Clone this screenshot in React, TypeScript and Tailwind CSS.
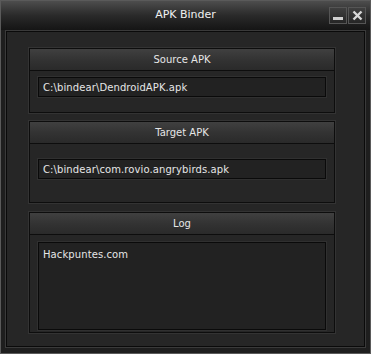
import React from "react";

const font = { fontFamily: '"DejaVu Sans", Verdana, sans-serif' };

function GroupHeader({ title }: { title: string }) {
  return (
    <div className="flex h-[22px] items-center justify-center border-b border-[#0d0d0d] bg-gradient-to-b from-[#404040] via-[#333333] to-[#2a2a2a] text-[10px] text-[#e6e6e6]">
      {title}
    </div>
  );
}

function PathGroup({ title, value, className }: { title: string; value: string; className: string }) {
  return (
    <div className={`flex w-[306px] flex-col border border-[#0d0d0d] bg-[#262626] shadow-[0_0_0_1px_#333] ${className}`}>
      <GroupHeader title={title} />
      <div className="mx-[8px] flex h-[20px] items-center border border-[#0a0a0a] bg-[#222222] px-[4px] text-[10px] tracking-[0.1px] text-[#e6e6e6] shadow-[0_0_0_1px_#303030]">
        {value}
      </div>
    </div>
  );
}

export default function App() {
  return (
    <div style={font} className="flex h-[354px] w-[371px] flex-col border border-[#5a5a5a] bg-[#1e1e1e]">
      <div className="relative flex h-[29px] shrink-0 items-center justify-center bg-gradient-to-b from-[#4d4d4d] via-[#2a2a2a] to-[#151515] text-[11px] text-[#f0f0f0]">
        APK Binder
        <div className="absolute right-[4px] top-[6px] flex gap-[1px]">
          <div className="flex h-[17px] w-[18px] items-end justify-center border border-[#555] bg-gradient-to-b from-[#3f3f3f] to-[#262626] pb-[3px]">
            <div className="h-[3px] w-[10px] bg-[#d0d0d0]" />
          </div>
          <div className="flex h-[17px] w-[18px] items-center justify-center border border-[#555] bg-gradient-to-b from-[#3f3f3f] to-[#262626]">
            <svg width="11" height="11" viewBox="0 0 11 11">
              <path d="M1.5 1.5 L9.5 9.5 M9.5 1.5 L1.5 9.5" stroke="#d8d8d8" strokeWidth="2.4" />
            </svg>
          </div>
        </div>
      </div>
      <div className="mx-[4px] mb-[5px] flex flex-1 flex-col border border-[#3a3a3a] bg-[#111]">
        <div className="flex flex-1 flex-col border border-[#0a0a0a] bg-[#262626] pl-[22px] pt-[16px]">
          <PathGroup title="Source APK" value="C:\bindear\DendroidAPK.apk" className="h-[65px] [&>div:nth-child(2)]:mt-[6px]" />
          <div className="h-[8px]" />
          <PathGroup title="Target APK" value="C:\bindear\com.rovio.angrybirds.apk" className="h-[82px] [&>div:nth-child(2)]:mt-[15px]" />
          <div className="h-[9px]" />
          <div className="flex h-[121px] w-[306px] flex-col border border-[#0d0d0d] bg-[#262626] shadow-[0_0_0_1px_#333]">
            <GroupHeader title="Log" />
            <div className="mx-[8px] mt-[7px] h-[88px] border border-[#0a0a0a] bg-[#222222] px-[4px] pt-[4px] text-[10px] tracking-[0.1px] text-[#e6e6e6] shadow-[0_0_0_1px_#303030]">
              Hackpuntes.com
            </div>
          </div>
        </div>
      </div>
    </div>
  );
}
